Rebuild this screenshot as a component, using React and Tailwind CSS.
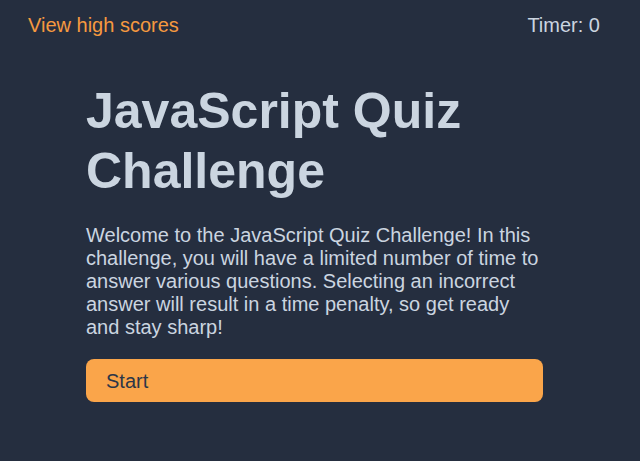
export default function App() {
  return (
    <div className="min-h-screen w-full bg-[#252e3f] font-['Liberation_Sans',Arial,sans-serif]">
      <header className="flex items-center justify-between pl-7 pr-10 pt-[13px]">
        <a href="#" className="text-[20px] leading-6 text-[#f6993f]">
          View high scores
        </a>
        <span className="text-[20px] leading-6 text-[#cbd5e0]">Timer: 0</span>
      </header>

      <main className="ml-[86px] w-[457px] pt-[44px]">
        <h1 className="text-[50px] font-bold leading-[60px] text-[#cbd5e0]">
          JavaScript Quiz Challenge
        </h1>
        <p className="mt-[23px] text-[20px] leading-[23px] text-[#cbd5e0]">
          Welcome to the JavaScript Quiz Challenge! In this challenge, you will have a limited
          number of time to answer various questions. Selecting an incorrect answer will result in
          a time penalty, so get ready and stay sharp!
        </p>
        <button className="mt-[20px] h-[43px] w-full rounded-lg bg-[#faa54a] px-5 text-left text-[20px] text-[#2d3748]">
          Start
        </button>
      </main>
    </div>
  );
}
